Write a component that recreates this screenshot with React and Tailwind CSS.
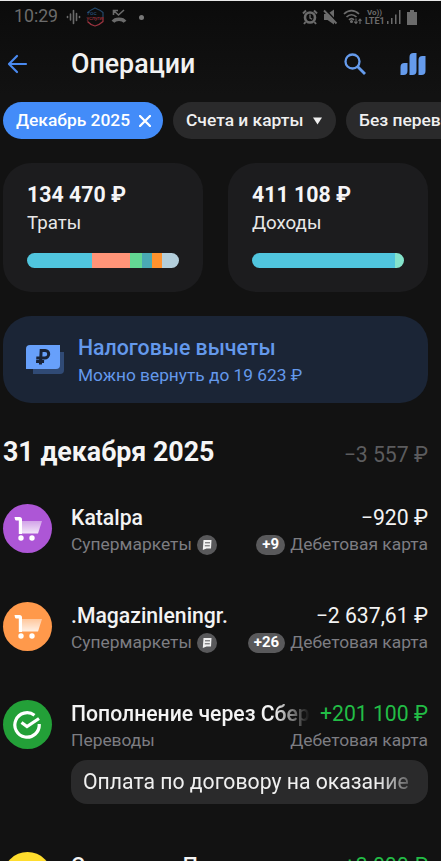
import React from 'react';

const spending = [
    { color: 'bg-[#50c5de]', width: 65 },
    { color: 'bg-[#ff9478]', width: 38 },
    { color: 'bg-[#63d793]', width: 12 },
    { color: 'bg-[#4aa9b4]', width: 10 },
    { color: 'bg-[#ff922e]', width: 10 },
    { color: 'bg-[#b3cedb]', width: 17 },
];

const income = [
    { color: 'bg-[#50c5de]', width: 143 },
    { color: 'bg-[#84e3cb]', width: 9 },
];

const StatusBar = () => (
    <div className="flex items-center justify-between h-[33px] pl-[14px] pr-[24px] border-t border-[#e8e8e8] text-[#6b6b6b]">
        <div className="flex items-center">
            <span className="w-[45px] text-[17.7px] leading-none whitespace-nowrap">10:29</span>
            <svg className="ml-[7px]" width="15" height="16" viewBox="0 0 15 16" stroke="currentColor" strokeWidth="1.6" strokeLinecap="round">
                <path d="M1.5 7.500v1M4.500 5v6M7.500 1.500v13M10.500 4.500v7M13.500 7.500v1" />
            </svg>
            <svg className="ml-[5px]" width="19" height="20" viewBox="0 0 19 20" fill="none" strokeWidth="1.2">
                <path d="M1.500 6Q2 4.500 9 1q5 2 8 4.500V10" stroke="#24486a" />
                <path d="M17 10v4.500Q14 17.500 9 19q-5-1.500-7.500-4.500" stroke="#9c3440" />
                <text x="1.500" y="8" fontSize="6" fill="#2b5b88" stroke="none">гос</text>
                <text x="0.500" y="12.500" fontSize="5.500" fill="#a03440" stroke="none" textLength="16">услуги</text>
            </svg>
            <svg className="ml-[6px]" width="16" height="16" viewBox="0 0 16 16" fill="none" stroke="currentColor">
                <path d="M2.500 6V1.500h4.500M2.500 1.500l5 4.500L13 1" strokeWidth="1.6" />
                <path d="M2 12.800c1.500-2.300 3.500-2.600 6-2.600s4.500.3 6 2.600" strokeWidth="3.400" />
            </svg>
            <span className="ml-[12px] w-[5px] h-[5px] rounded-full bg-[#777]" />
        </div>
        <div className="flex items-center">
            <svg width="16" height="16" viewBox="0 0 16 16" fill="none" stroke="currentColor">
                <circle cx="8" cy="8.500" r="5" strokeWidth="2.600" />
                <path d="M1 4.500 4 1.500M15 4.500l-3-3M3.500 13 2 15M12.500 13l1.500 2" strokeWidth="2" />
                <path d="M8 5.500v3.500l2.200 1.200" strokeWidth="1.300" />
            </svg>
            <svg className="ml-[5px]" width="15" height="16" viewBox="0 0 15 16">
                <path d="M1 5h3.500L11 .5v15L4.500 11H1z" fill="currentColor" />
                <path d="m2 0 13 14" stroke="#0d0d0d" strokeWidth="1.600" />
                <path d="m1 1.500 12.500 13" stroke="currentColor" strokeWidth="1.900" />
            </svg>
            <svg className="ml-[5px]" width="19" height="16" viewBox="0 0 19 16" fill="none" stroke="currentColor" strokeWidth="1.700">
                <path d="M1 5c4.500-4.500 10.500-4.500 15 0M3.500 8c3-3 7-3 10 0M6 10.800c1.500-1.500 3.500-1.500 5 0" />
                <circle cx="8.500" cy="12.500" r=".7" fill="currentColor" />
                <path d="M13 9.500v5m-1.800-1.800L13 14.500l1.500-1.800M17 15v-5m-1.500 1.800L17 10l1.500 1.800" strokeWidth="1.100" />
            </svg>
            <div className="ml-[3px] w-[21px] flex flex-col leading-[8px] font-bold whitespace-nowrap">
                <span className="pl-[2px] text-[8px]">Vo))</span>
                <span className="text-[9px]">LTE1</span>
            </div>
            <svg className="ml-[1px]" width="14" height="14" viewBox="0 0 14 14" fill="currentColor">
                <path d="M0 11h1.500v3H0zM4 8h1.500v6H4zM8 4.500h1.500V14H8zM12 0h1.500v14H12z" />
            </svg>
            <svg className="ml-[6px]" width="10" height="15" viewBox="0 0 10 15" fill="currentColor">
                <path d="M3 0h4v2h3v13H0V2h3z" />
            </svg>
        </div>
    </div>
);

const Header = () => (
    <div className="flex items-center h-[62px] pl-[7px] pr-[15px]">
        <svg width="21" height="20" viewBox="0 0 21 20" fill="none" stroke="#4a8af0" strokeWidth="2.200" strokeLinecap="round" strokeLinejoin="round">
            <path d="M10 2 2 10l8 8M2.500 10H19" />
        </svg>
        <h1 className="ml-[43px] text-[26.8px] leading-[32px] font-medium text-[#f2f2f2]">Операции</h1>
        <svg className="ml-auto" width="22" height="22" viewBox="0 0 22 22" fill="none" stroke="#659bec" strokeWidth="2.300">
            <circle cx="8.500" cy="8.500" r="7" />
            <path d="m13.500 13.500 7.500 7.500" strokeWidth="2.800" />
        </svg>
        <svg className="ml-[34px]" width="26" height="22" viewBox="0 0 26 22" fill="#659bec">
            <path d="M.5 14q0-4 4-4h3v8q0 4-4 4h-3zM9.500 4q0-4 4-4h3v18q0 4-4 4h-3zM18.500 7q0-4 4-4h3v15q0 4-4 4h-3z" />
        </svg>
    </div>
);

const Filters = () => (
    <div className="flex shrink-0 gap-[10px] mt-[7px] pl-[3px] h-[37px] overflow-hidden text-[17.4px] font-medium whitespace-nowrap text-[#f0f0f0]">
        <button className="flex items-center justify-between shrink-0 w-[160px] rounded-full bg-[#438cf9] pl-[13px] pr-[12px] text-white">
            Декабрь 2025
            <svg width="12" height="12" viewBox="0 0 12 12" stroke="currentColor" strokeWidth="2.300" strokeLinecap="round">
                <path d="m1 1 10 10M11 1 1 11" />
            </svg>
        </button>
        <button className="flex items-center justify-between shrink-0 w-[163px] rounded-full bg-[#2a2a2b] pl-[13px] pr-[14px]">
            Счета и карты
            <svg width="9" height="8" viewBox="0 0 9 8" fill="currentColor">
                <path d="M0 0.500h9L4.500 7.500z" />
            </svg>
        </button>
        <button className="flex items-center shrink-0 w-[180px] rounded-full bg-[#2a2a2b] pl-[13px]">Без переводов</button>
    </div>
);

const SummaryCard = ({ amount, label, parts }) => (
    <div className="w-[200px] h-[129px] rounded-[28px] bg-[#1c1c1e] px-[24px] pt-[18px]">
        <div className="text-[21.3px] leading-[28px] font-bold text-[#f5f5f7] whitespace-nowrap">{amount}</div>
        <div className="text-[18.7px] leading-[29px] text-[#e8e8e8]">{label}</div>
        <div className="flex mt-[15px] h-[15px] rounded-full overflow-hidden">
            {parts.map((p) => (
                <div key={p.color} className={p.color} style={{ width: p.width }} />
            ))}
        </div>
    </div>
);

const TaxBanner = () => (
    <div className="flex items-center shrink-0 mt-[24px] mx-[3px] w-[425px] h-[87px] rounded-[28px] bg-[#1b2536] pl-[22px] text-[#6499ec]">
        <svg width="40" height="32" viewBox="0 0 40 32">
            <path d="M8 8h31v18q0 4-4 4H8z" fill="#304a75" />
            <path d="M5 1h30v20q0 4-4 4H1V5q0-4 4-4z" fill="#67a0fb" />
            <path d="M15.500 20.500V6.500h4a3.500 3.500 0 0 1 0 7.500H11M11 17.500h8" fill="none" stroke="#182236" strokeWidth="3" transform="skewX(-3) translate(1)" />
        </svg>
        <div className="ml-[13px] pt-[2px] whitespace-nowrap">
            <div className="text-[21.3px] leading-[29px] font-medium">Налоговые вычеты</div>
            <div className="text-[17.3px] leading-[27px]">Можно вернуть до 19 623 ₽</div>
        </div>
    </div>
);

const CartIcon = ({ id }) => (
    <svg width="28" height="26" viewBox="0 0 28 26">
        <defs>
            <linearGradient id={id} x1="0" y1="0" x2="0" y2="1">
                <stop offset="0" stopColor="#fff" stopOpacity=".45" />
                <stop offset="1" stopColor="#fff" stopOpacity=".85" />
            </linearGradient>
        </defs>
        <path d="M7 5h21l-4 12.500H8z" fill={`url(#${id})`} />
        <path d="M.5 1H5.500Q8 1 8 3.500V18H4.800V4.500H2Q1 4.500 .5 1z" fill="#fff" />
        <circle cx="7" cy="22" r="2.700" fill="#fff" />
        <circle cx="18" cy="22" r="2.700" fill="#fff" />
    </svg>
);

const SberIcon = () => (
    <svg className="-translate-x-px" width="30" height="30" viewBox="0 0 30 30" fill="none" stroke="#fff" strokeWidth="3.200">
        <path d="M22.500 5.300A12.200 12.200 0 1 0 27.200 14" />
        <path d="m9.500 12.500 5.500 4L27 8.500" />
    </svg>
);

const NoteBadge = () => (
    <span className="flex items-center justify-center w-[20px] h-[20px] rounded-full bg-[#59595b]">
        <svg width="10" height="10" viewBox="0 0 10 10">
            <path d="M1.500 0H9.500L9 8.500H4.500L.8 10z" fill="#f2f2f2" />
            <path d="M3 2.800h5M2.800 5.800h5" stroke="#59595b" strokeWidth="1" />
        </svg>
    </span>
);

const Operation = ({ icon, color, title, category, amount, positive, extra, badge, fade, note }) => (
    <div className="flex h-[98px] shrink-0">
        <div className={`flex items-center justify-center shrink-0 w-[49px] h-[49px] rounded-full ${color}`}>{icon}</div>
        <div className="ml-[19px] w-[357px] shrink-0 whitespace-nowrap">
            <div className="flex justify-between h-[28px] text-[21.2px] leading-[28px]">
                <span className={`font-medium text-[#f3f3f3] ${fade ? '[mask-image:linear-gradient(90deg,#000_85%,transparent)]' : ''}`}>{title}</span>
                <span className={positive ? 'text-[#22bd46]' : 'text-[#f3f3f3]'}>{amount}</span>
            </div>
            <div className="flex items-center justify-between h-[25px] text-[17.4px] text-[#7d7d82]">
                <div className="flex items-center gap-[5px]">
                    {category}
                    {badge && <NoteBadge />}
                </div>
                <div className="flex items-center gap-[5px]">
                    {extra && (
                        <span className="flex items-center h-[20px] px-[6px] rounded-full bg-[#59595b] text-[15px] font-bold text-white">{extra}</span>
                    )}
                    Дебетовая карта
                </div>
            </div>
            {note && (
                <div className="mt-[7px] h-[44px] rounded-[16px] bg-[#2a2a2b] px-[12px] text-[21.2px] leading-[44px] text-[#f0f0f0]">
                    <div className="w-[328px] [mask-image:linear-gradient(90deg,#000_90%,transparent_103%)]">{note}</div>
                </div>
            )}
        </div>
    </div>
);

export default function App() {
    return (
        <div className="flex flex-col w-[441px] h-[861px] overflow-hidden bg-[#121212] font-['Roboto',sans-serif]">
            <div className="shrink-0 bg-linear-to-b from-[#0b0b0b] to-[#121212]">
                <StatusBar />
                <Header />
            </div>
            <Filters />
            <div className="flex shrink-0 gap-[25px] mt-[24px] px-[3px]">
                <SummaryCard amount="134 470 ₽" label="Траты" parts={spending} />
                <SummaryCard amount="411 108 ₽" label="Доходы" parts={income} />
            </div>
            <TaxBanner />
            <div className="flex justify-between shrink-0 mt-[31px] h-[40px] pl-[3px] pr-[13px] whitespace-nowrap">
                <h2 className="text-[26.8px] leading-[36px] font-bold text-[#f5f5f5]">31 декабря 2025</h2>
                <span className="text-[21.2px] leading-[42px] text-[#5c5c5e]">−3 557 ₽</span>
            </div>
            <div className="flex flex-col mt-[30px] pl-[3px]">
                <Operation icon={<CartIcon id="cartPurple" />} color="bg-[#ad56d6]" title="Katalpa" category="Супермаркеты" amount="−920 ₽" extra="+9" badge />
                <Operation icon={<CartIcon id="cartOrange" />} color="bg-[#ff994b]" title=".Magazinleningr." category="Супермаркеты" amount="−2 637,61 ₽" extra="+26" badge />
                <Operation icon={<SberIcon />} color="bg-[#23a038]" title="Пополнение через Сбер" category="Переводы" amount="+201 100 ₽" note="Оплата по договору на оказание" positive fade />
                <div className="h-[54px] shrink-0" />
                <Operation color="bg-[#ffdd2d]" title="Станислав П." category="Переводы" amount="+3 000 ₽" positive />
            </div>
        </div>
    );
}
